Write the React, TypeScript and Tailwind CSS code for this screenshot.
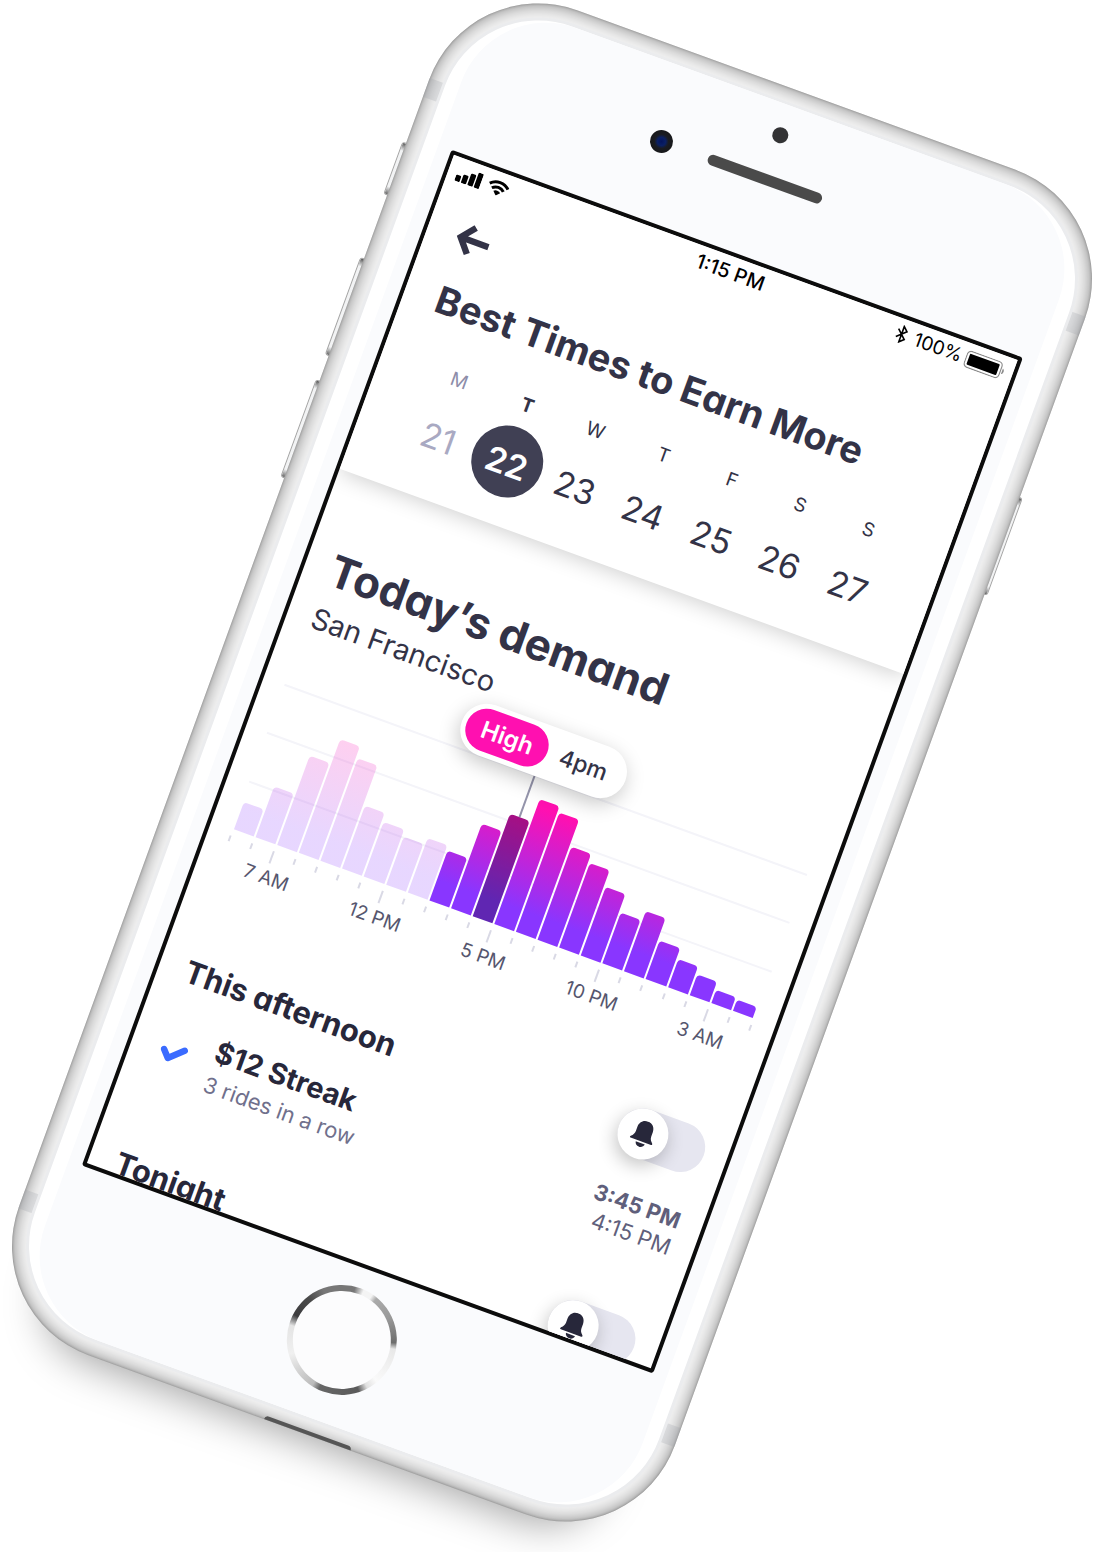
import React from "react";

type Day = { letter: string; date: number; state: "past" | "selected" | "upcoming" };

const days: Day[] = [
  { letter: "M", date: 21, state: "past" },
  { letter: "T", date: 22, state: "selected" },
  { letter: "W", date: 23, state: "upcoming" },
  { letter: "T", date: 24, state: "upcoming" },
  { letter: "F", date: 25, state: "upcoming" },
  { letter: "S", date: 26, state: "upcoming" },
  { letter: "S", date: 27, state: "upcoming" },
];

const letterStyle = {
  past: "text-[#8d8da9] font-normal",
  selected: "text-[#333347] font-bold",
  upcoming: "text-[#333347] font-normal",
};

const dateStyle = {
  past: "text-[#a9a9c2]",
  selected: "bg-[#404054] text-white font-semibold",
  upcoming: "text-[#333347]",
};

const demand = [
  29, 54, 95, 121, 109, 67, 58, 51, 58, 53, 90, 109, 133, 127, 99, 90, 73, 54, 64, 41, 30, 22, 14, 12,
];
const firstOpenHour = 9;
const currentHour = 11;

const hourLabels = ["7 AM", "12 PM", "5 PM", "10 PM", "3 AM"];

const barGradient =
  "bg-[linear-gradient(to_top,#8936ff_0px,#8936ff_22px,#ff10b0_125px)]";

const headingFont = "font-bold whitespace-nowrap [font-feature-settings:'cv11']";

function SignalIcon() {
  return (
    <svg width="26" height="16" viewBox="0 0 26 16" aria-hidden="true">
      <rect x="0" y="9.500" width="5.400" height="6.500" rx="1.2" />
      <rect x="6.900" y="7" width="5.400" height="9" rx="1.2" />
      <rect x="13.800" y="3.500" width="5.400" height="12.500" rx="1.2" />
      <rect x="20.600" y="0" width="5.400" height="16" rx="1.2" />
    </svg>
  );
}

function WifiIcon() {
  return (
    <svg width="22" height="16" viewBox="0 0 22 16" aria-hidden="true">
      <path d="M1.300 6.300a13.600 13.600 0 0 1 19.400 0" fill="none" stroke="black" strokeWidth="3" />
      <path d="M4.900 10a8.500 8.500 0 0 1 12.200 0" fill="none" stroke="black" strokeWidth="3" />
      <path d="M11 16 7.400 12.400a5 5 0 0 1 7.200 0z" />
    </svg>
  );
}

function BluetoothIcon() {
  return (
    <svg width="12" height="19" viewBox="0 0 12 19" fill="none" stroke="black" strokeWidth="1.600" aria-hidden="true">
      <path d="M1.4 5.3 10.3 13.6 6 17.6V1.4l4.3 4L1.4 13.7" />
    </svg>
  );
}

function BatteryIcon() {
  return (
    <svg width="41" height="18" viewBox="0 0 41 18" aria-hidden="true">
      <rect x="0.6" y="0.6" width="36.8" height="16.8" rx="4" fill="none" stroke="#8a8a8a" strokeWidth="1.2" />
      <rect x="3.2" y="3.2" width="31.6" height="11.6" rx="1" />
      <path d="M39 6v6c1-.4 1.8-1.600 1.800-3S40 6.400 39 6z" fill="#8a8a8a" />
    </svg>
  );
}

function BellIcon() {
  return (
    <svg width="24" height="27" viewBox="0 0 24 27" fill="#27273a" aria-hidden="true">
      <path d="M12 0C7 0 3.800 3.700 3.800 8.500v4.500c0 2.500-1 4.300-3.200 6.200-.9.800-.6 1.900.6 1.900h21.600c1.200 0 1.500-1.100.6-1.900-2.200-1.900-3.200-3.700-3.200-6.200V8.500C20.200 3.700 17 0 12 0z" />
      <path d="M7.200 22.700h9.600c-.3 2.400-2.300 4.100-4.800 4.100s-4.500-1.700-4.800-4.100z" />
    </svg>
  );
}

function StatusBar() {
  return (
    <div className="grid h-[31px] grid-cols-[1fr_auto_1fr] items-center px-[9px] text-black">
      <div className="flex items-center gap-[7px]">
        <SignalIcon />
        <WifiIcon />
      </div>
      <span className="text-[20px] leading-6 font-medium">1:15 PM</span>
      <div className="flex items-center justify-end gap-[4px]">
        <BluetoothIcon />
        <span className="pl-[4px] text-[19px] leading-6">100%</span>
        <BatteryIcon />
      </div>
    </div>
  );
}

function Header() {
  return (
    <header className="relative bg-white pb-[28px] shadow-[0_2px_22px_rgba(0,0,0,0.2)]">
      <StatusBar />
      <button type="button" aria-label="Back" className="mt-[28px] ml-[30px] block">
        <svg width="35" height="32" viewBox="0 0 35 32" fill="none" stroke="#333347" strokeWidth="6.400" aria-hidden="true">
          <path d="M34 16H5M16 2.200 4.500 16 16 29.800" />
        </svg>
      </button>
      <h1 className={`mt-[25px] pl-[33px] text-[38px] leading-[48px] text-[#333347] ${headingFont}`}>
        Best Times to Earn More
      </h1>
      <ol className="mt-[35px] grid grid-cols-7 px-[46px]">
        {days.map((day) => (
          <li key={day.date}>
            <button type="button" className="flex w-full flex-col items-center gap-[11px]">
              <span className={`text-[19px] leading-6 ${letterStyle[day.state]}`}>{day.letter}</span>
              <span
                className={`flex size-[72px] items-center justify-center rounded-full pt-[3px] text-[34px] leading-10 ${dateStyle[day.state]}`}
              >
                {day.date}
              </span>
            </button>
          </li>
        ))}
      </ol>
    </header>
  );
}

function DemandTooltip() {
  return (
    <div className="absolute bottom-full left-1/2 z-10 flex -translate-x-1/2 flex-col items-center">
      <div className="relative z-10 flex items-center rounded-full bg-white p-[5px] shadow-[0_6px_20px_rgba(0,0,0,0.22)]">
        <span className="rounded-full bg-[#ff10b0] px-[16px] py-[7px] text-[24px] leading-[29px] font-semibold text-white">
          High
        </span>
        <span className="pr-[15px] pl-[13px] text-[23px] leading-[29px] font-medium text-[#333347]">4pm</span>
      </div>
      <span className="h-[44px] w-[2px] bg-[#9494ab]" />
    </div>
  );
}

function DemandChart() {
  return (
    <div className="mt-[54px]">
      <div className="relative">
        <div className="absolute inset-0 grid grid-rows-3">
          <span className="border-t-2 border-[#f4f4f9]" />
          <span className="border-t-2 border-[#f4f4f9]" />
          <span className="border-t-2 border-[#f4f4f9]" />
        </div>
        <ul className="relative flex h-[154px] items-end gap-[2px] px-[2px]">
          {demand.map((height, hour) => (
            <li key={hour} className="relative flex-1" style={{ height }}>
              <div
                className={`h-full rounded-t-[4px] ${barGradient} ${hour < firstOpenHour ? "opacity-20" : ""} ${
                  hour === currentHour ? "brightness-[0.7]" : ""
                }`}
              />
              {hour === currentHour && <DemandTooltip />}
            </li>
          ))}
        </ul>
      </div>
      <div className="mt-[7px] flex h-[14px] justify-between">
        {Array.from({ length: 25 }, (_, i) => (
          <span key={i} className={`w-[2px] bg-[#d9d9e5] ${i % 5 === 2 ? "h-[13px]" : "h-[6px]"}`} />
        ))}
      </div>
      <div className="mr-[-12px] ml-[-9px] mt-[2px] grid grid-cols-5 text-center text-[19px] leading-6 text-[#56566e]">
        {hourLabels.map((label) => (
          <span key={label}>{label}</span>
        ))}
      </div>
    </div>
  );
}

function BellToggle({ label }: { label: string }) {
  return (
    <label className="relative block h-[50px] w-[90px] cursor-pointer">
      <input
        type="checkbox"
        role="switch"
        aria-label={label}
        className="block h-[50px] w-[90px] cursor-pointer appearance-none rounded-full bg-[#e6e6f0]"
      />
      <span className="absolute top-0 left-0 flex size-[51px] items-center justify-center rounded-full bg-white shadow-[0_6px_18px_rgba(0,0,0,0.24)]">
        <BellIcon />
      </span>
    </label>
  );
}

type Bonus = { reward: string; detail: string; start: string; end: string };

function Period({ title, bonus }: { title: string; bonus?: Bonus }) {
  return (
    <section className="flex justify-between pb-[62px]">
      <div>
        <h3 className={`pt-[10px] pl-[5px] text-[31px] leading-9 text-[#27273a] ${headingFont}`}>{title}</h3>
        {bonus && (
          <div className="mt-[32px] flex items-center gap-[26px] pl-[8px]">
            <svg width="27" height="21" viewBox="0 0 27 21" fill="none" stroke="#3a6bff" strokeWidth="6.500" strokeLinecap="round" strokeLinejoin="round" aria-hidden="true">
              <path d="M3.500 9.500 10 16.500 23.500 4" />
            </svg>
            <div>
              <p className="text-[29px] leading-8 font-bold text-[#27273a]">{bonus.reward}</p>
              <p className="mt-[4px] text-[22px] leading-7 text-[#70708c]">{bonus.detail}</p>
            </div>
          </div>
        )}
      </div>
      <div className="flex flex-col items-end pr-[1px]">
        <BellToggle label={`Notify me: ${title}`} />
        {bonus && (
          <div className="mt-[31px] text-right text-[22px] leading-7 text-[#5f5f7b]">
            <p className="font-bold">{bonus.start}</p>
            <p>{bonus.end}</p>
          </div>
        )}
      </div>
    </section>
  );
}

function Screen() {
  return (
    <div className="relative h-[1081px] overflow-hidden rounded-[3px] border-4 border-[#0c0c0c] bg-white">
      <Header />
      <main className="px-[22px] pt-[71px]">
        <h2 className={`pl-[4px] text-[44px] leading-[52px] text-[#333347] ${headingFont}`}>Today’s demand</h2>
        <p className="mt-[8px] pl-[3px] text-[29px] leading-9 text-[#333347]">San Francisco</p>
        <DemandChart />
        <div className="mt-[74px]">
          <Period
            title="This afternoon"
            bonus={{ reward: "$12 Streak", detail: "3 rides in a row", start: "3:45 PM", end: "4:15 PM" }}
          />
          <Period title="Tonight" />
        </div>
      </main>
    </div>
  );
}

const sideKey =
  "absolute w-[8px] rounded-[3px] border border-[#a4a4a4] bg-[linear-gradient(to_bottom,#555_0px,#f2f3f4_8px,#f2f3f4_calc(100%-8px),#666_100%)]";

const antenna = "absolute h-[20px] w-[16px] bg-[#9aa0a8]/25";

function Phone() {
  return (
    <div className="relative w-[698px] shrink-0 rotate-20">
      <span className={`${sideKey} top-[183px] left-[-4px] h-[56px]`} />
      <span className={`${sideKey} top-[306px] left-[-4px] h-[104px]`} />
      <span className={`${sideKey} top-[436px] left-[-4px] h-[104px]`} />
      <span className={`${sideKey} top-[306px] right-[-3px] h-[104px]`} />
      <div className="relative rounded-[116px] bg-[#f5f5f5] shadow-[0_60px_40px_-54px_rgba(0,0,0,0.36)]">
        <div className="absolute inset-0 rounded-[116px] shadow-[inset_0_0_3px_rgba(0,0,0,0.3),inset_0_0_18px_rgba(0,0,0,0.5)]" />
        <span className={`${antenna} top-[114px] left-0`} />
        <span className={`${antenna} top-[114px] right-0`} />
        <span className={`${antenna} top-[1297px] left-0`} />
        <span className={`${antenna} top-[1297px] right-0`} />
        <span className="absolute bottom-0 left-1/2 h-[4px] w-[92px] -translate-x-1/2 rounded-t-[4px] bg-[#555]" />
        <div className="absolute inset-[14px] rounded-[102px] border-[3px] border-[#ebecee] bg-white">
          <div className="size-full px-[14px]">
            <div className="size-full rounded-[90px] bg-[#fafbfd]" />
          </div>
        </div>
        <div className="relative px-[45px]">
          <div className="flex h-[174px] flex-col items-center pt-[40px]">
            <span className="size-[16px] rounded-full bg-[#333335]" />
            <div className="mt-[27px] grid w-full grid-cols-[1fr_auto_1fr] items-center">
              <span className="mr-[38px] size-[23px] justify-self-end rounded-full bg-[radial-gradient(circle,#04145c_0px,#0a2066_4px,#1a1c22_7px,#17181a_12px)]" />
              <span className="h-[11px] w-[121px] rounded-full bg-[#4a4a4a]" />
            </div>
          </div>
          <Screen />
          <div className="flex h-[176px] justify-center pt-[20px]">
            <button
              type="button"
              aria-label="Home"
              className="size-[110px] rounded-full bg-[conic-gradient(from_-20deg,#777_0deg,#777_14deg,#f4f4f4_24deg,#f4f4f4_34deg,#aaa_40deg,#999_65deg,#6d6d6d_93deg,#e8e8e8_100deg,#fafafa_140deg,#e0e0e0_152deg,#5a5a5a_162deg,#666_205deg,#bbb_213deg,#d4d4d4_235deg,#f0f0f0_255deg,#e4e4e4_286deg,#3c3c3e_298deg,#4a4a4a_322deg,#777_340deg,#777_360deg)] p-[6px]"
            >
              <span className="block size-full rounded-full bg-[#fcfcfd]" />
            </button>
          </div>
        </div>
      </div>
    </div>
  );
}

export default function App() {
  return (
    <div className="flex min-h-screen justify-center overflow-hidden bg-white pt-[47px] pb-[74px] pl-[10px] font-[Inter,'Liberation_Sans',sans-serif]">
      <Phone />
    </div>
  );
}
